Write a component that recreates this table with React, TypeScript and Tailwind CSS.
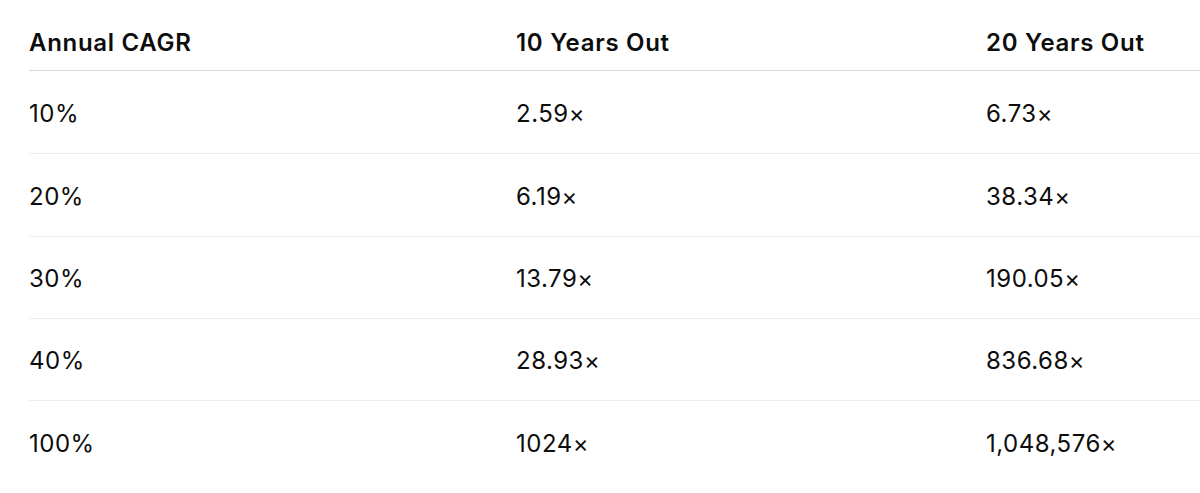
const rows = [
  ['10%', '2.59×', '6.73×'],
  ['20%', '6.19×', '38.34×'],
  ['30%', '13.79×', '190.05×'],
  ['40%', '28.93×', '836.68×'],
  ['100%', '1024×', '1,048,576×'],
]

const heights = ['h-[83px]', 'h-[83px]', 'h-[82px]', 'h-[82px]', 'h-[83px]']

export default function App() {
  return (
    <div className="w-[1200px] h-[493px] overflow-hidden bg-white pl-[29px] font-['Inter',sans-serif] text-[#0d0d0d]">
      <div className="w-[1200px]">
        <div className="grid grid-cols-[487px_470px_1fr] h-[71px] border-b border-[#d9d9d9] pt-[15px] items-center text-[24px] font-semibold tracking-[0.7px]">
          <div>Annual CAGR</div>
          <div>10 Years Out</div>
          <div>20 Years Out</div>
        </div>
        {rows.map((r, i) => (
          <div
            key={i}
            className={
              'grid grid-cols-[487px_470px_1fr] items-center pt-[3px] text-[24px] tracking-[0.5px] ' +
              heights[i] +
              (i < rows.length - 1 ? ' border-b border-[#ececec]' : '')
            }
          >
            <div>{r[0]}</div>
            <div>{r[1]}</div>
            <div>{r[2]}</div>
          </div>
        ))}
      </div>
    </div>
  )
}
